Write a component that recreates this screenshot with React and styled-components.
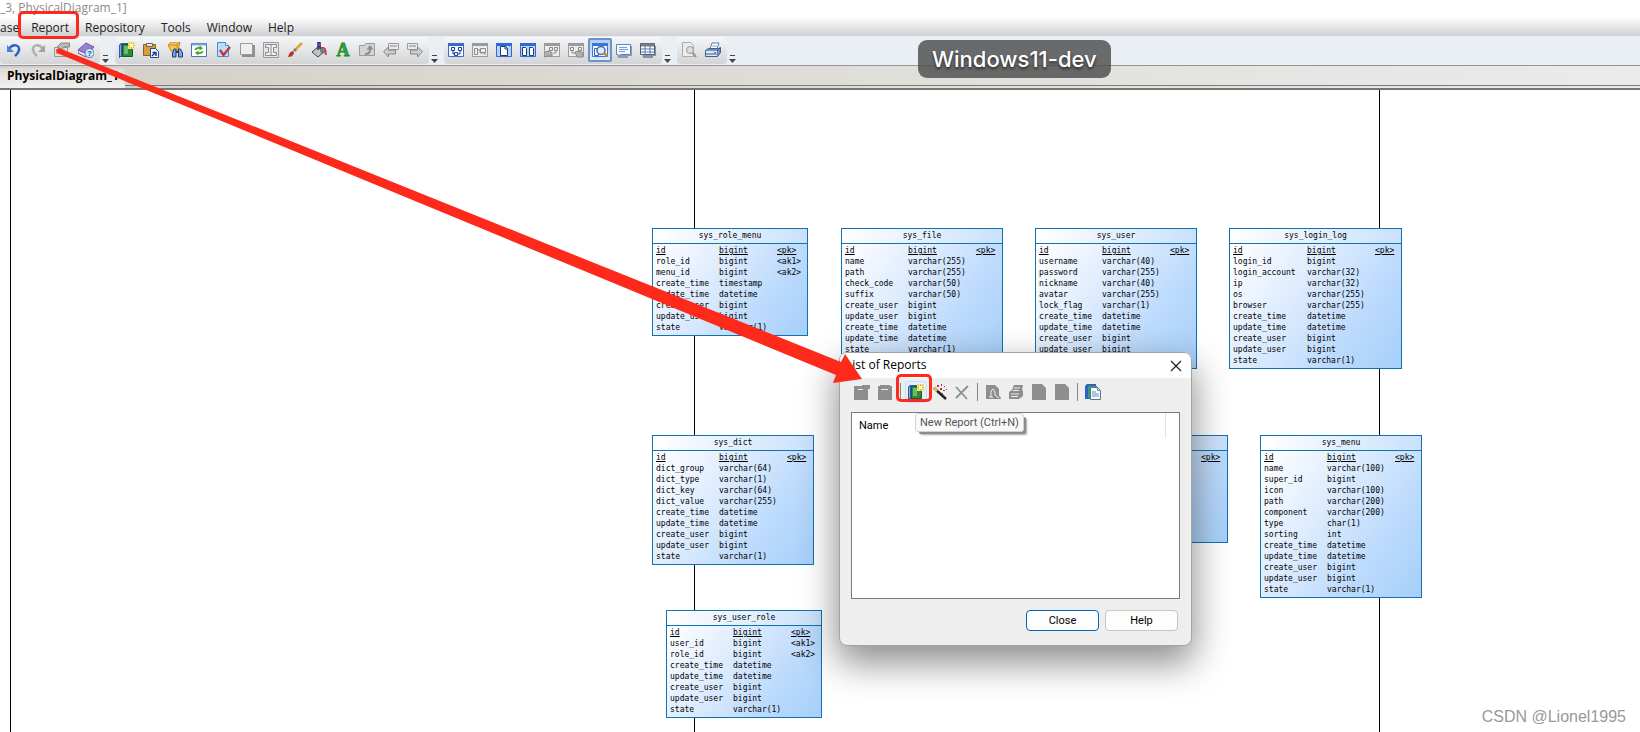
import React from 'react'
import styled, { createGlobalStyle, css } from 'styled-components'

const uiFont = '"Open Sans", "Noto Sans", sans-serif'
const monoFont = '"DejaVu Sans Mono", monospace'
const red = '#fd2a1b'

const GlobalStyle = createGlobalStyle`
  * { box-sizing: border-box; }
  body { margin: 0; background: #fff; color: #111; font-family: ${uiFont}; }
  button { font: inherit; color: inherit; border: 0; padding: 0; background: none; }
`

/* window */
const Window = styled.div`
  position: relative;
  display: flex;
  flex-direction: column;
  min-height: 100vh;
  overflow: hidden;
`
const TitleBar = styled.header`
  height: 18px;
  color: #8b8b8b;
  font-size: 12px;
  line-height: 16px;
  white-space: nowrap;
`
const MenuBar = styled.nav`
  display: flex;
  height: 18px;
  background: linear-gradient(#fdfdfe, #cfd0d2);
`
const MenuItem = styled.button`
  position: relative;
  padding: ${p => (p.$first ? '0 4px 0 0' : '0 8px')};
  font-size: 12px;
  line-height: 19px;
  color: #222;
`
const Highlight = styled.span`
  position: absolute;
  inset: ${p => p.$inset};
  border: 3px solid ${red};
  border-radius: 5px;
  z-index: 3;
  pointer-events: none;
`

/* toolbar */
const ToolBar = styled.div`
  display: flex;
  align-items: center;
  height: 30px;
  background: #e9eff5;
  border-bottom: 1px solid #939598;
`
const ToolGroup = styled.div`
  display: flex;
  padding: 1px 2px 2px ${p => (p.$first ? 2 : 0)}px;
  background: linear-gradient(#f5f6f7, #d3d4d6);
  border-radius: 4px;
`
const ToolButton = styled.button`
  display: grid;
  place-items: center;
  width: 24px;
  height: 24px;
  ${p => p.$active && css`
    background: linear-gradient(#b5cfee, #dcecfc);
    border: 2px solid #6c93c4;
    border-radius: 2px;
  `}
`
const MoreButton = styled.button`
  display: grid;
  place-items: end start;
  width: 15px;
  height: 24px;
  padding-left: 2px;
`

/* diagram tab */
const TabStrip = styled.div`
  display: flex;
  align-items: stretch;
  height: 24px;
  background: linear-gradient(90deg, #d3cfc7, #ecebea);
  border-bottom: 2px solid #757575;
`
const Tab = styled.button`
  margin-top: 2px;
  padding: 0 6px 5px 7px;
  border-radius: 0 4px 0 0;
  background: linear-gradient(#dedbd5, #f2f1ef);
  font-size: 12px;
  font-weight: 700;
  line-height: 15px;
  color: #000;
`
const TabLine = styled.div`
  flex: 1;
  margin-bottom: 2px;
  border-bottom: 1px solid #7c7a77;
`

/* canvas */
const Canvas = styled.main`
  position: relative;
  flex: 1;
  background: #fff;
`
const PageEdge = styled.div`
  position: absolute;
  top: 0;
  bottom: 0;
  left: ${p => p.$x}px;
  border-left: 1px solid #000;
`
const EntityBox = styled.section`
  position: absolute;
  left: ${p => p.$x}px;
  top: ${p => p.$y}px;
  width: ${p => p.$w}px;
  padding-bottom: 2px;
  border: 1px solid #0d74b1;
  background: linear-gradient(125deg, #fff 5%, #dcebfe 42%, #bcdafc 72%, #a6cffa);
  font-family: ${monoFont};
  font-size: 8px;
  color: #000;
`
const EntityName = styled.h2`
  margin: 0 0 1px;
  border-bottom: 1px solid #0d74b1;
  background: linear-gradient(100deg, #fff, #c9e1fc);
  font-size: inherit;
  font-weight: 400;
  line-height: 14px;
  text-align: center;
`
const EntityTable = styled.table`
  width: 100%;
  padding-left: 3px;
  border-spacing: 0;
  table-layout: fixed;
  line-height: 11px;
  white-space: nowrap;
  td { height: 11px; padding: 0; }
  tr.key td { text-decoration: underline; }
`
const Col = styled.col`
  width: ${p => p.$w}px;
`

/* dialog */
const Dialog = styled.div`
  position: absolute;
  left: 839px;
  top: 352px;
  width: 353px;
  border: 1px solid #a3a3a3;
  border-radius: 8px;
  overflow: hidden;
  background: #eee;
`
const DialogShadow = styled(Dialog)`
  height: 293px;
  border-color: transparent;
  overflow: visible;
  box-shadow: 0 16px 36px 2px rgba(0, 0, 0, .45);
`
const DialogTitle = styled.div`
  display: flex;
  justify-content: space-between;
  height: 25px;
  padding: 0 9px 0 6px;
  background: #fff;
  h1 { margin: 0; font-size: 12px; font-weight: 400; line-height: 23px; color: #000; }
`
const DialogTools = styled.div`
  display: flex;
  align-items: center;
  gap: 7px;
  height: 26px;
  margin: 1px 0 7px;
  padding-left: 14px;
`
const DialogTool = styled.button`
  position: relative;
  display: grid;
  place-items: center;
  width: 16px;
  height: 22px;
  ${p => p.$hot && css`
    width: 22px;
    margin: 0 -3px;
    background: #e2f0fb;
    border: 1px solid #c5e0f5;
    border-radius: 3px;
  `}
`
const Divider = styled.i`
  width: 1px;
  height: 18px;
  background: #858585;
`
const ReportList = styled.div`
  height: 187px;
  margin: 0 11px;
  border: 1px solid #767b85;
  background: #fff;
  table { width: calc(100% - 13px); border-spacing: 0; }
  th {
    height: 25px;
    padding: 0 0 0 7px;
    border-right: 1px solid #e2e2e2;
    font: 400 11px Roboto, Arial, sans-serif;
    text-align: left;
    color: #000;
  }
`
const DialogFooter = styled.div`
  display: flex;
  justify-content: flex-end;
  gap: 6px;
  padding: 11px 13px 14px;
`
const PushButton = styled.button`
  width: 73px;
  height: 21px;
  border: 1px solid ${p => (p.$primary ? '#0067c0' : '#c6c6c6')};
  border-radius: 4px;
  background: #fdfdfd;
  font-family: Roboto, Arial, sans-serif;
  font-size: 11px;
  color: #000;
`
const Tooltip = styled.div`
  position: absolute;
  left: 915px;
  top: 413px;
  padding: 0 4px;
  border: 1px solid #d2d2d2;
  border-radius: 3px;
  background: #f9f9f9;
  box-shadow: 3px 3px 0 -1px #8b8b8b, 4px 4px 2px -1px #aaa;
  font: 11px/17px Roboto, Arial, sans-serif;
  color: #555;
`
const Arrow = styled.svg`
  position: absolute;
  left: 0;
  top: 0;
  pointer-events: none;
`
const Machine = styled.div`
  position: absolute;
  left: 918px;
  top: 40px;
  padding: 0 14px;
  border-radius: 9px;
  background: rgba(72, 72, 72, .8);
  color: #fff;
  font: 500 22px/38px Inter, sans-serif;
  text-shadow: 0 2px 3px rgba(0, 0, 0, .6);
`
const Watermark = styled.div`
  position: absolute;
  right: 14px;
  bottom: 5px;
  color: #999;
  font: 16px/20px "Liberation Sans", Arial, sans-serif;
`

const Svg = ({ children, w = 16, h = 16 }) => (
  <svg width={w} height={h} viewBox={`0 0 ${w} ${h}`} fill="none" aria-hidden="true">{children}</svg>
)

const GreenBook = () => (
  <Svg>
    <path d="M0 3l2-2h11v13l-2 2H0z" fill="#2b5fae" />
    <path d="M3.500 2.500h10v12h-10z" fill="#2f8b3b" stroke="#1b5a2a" />
    <path d="M5 4h4v8H5z" fill="#6dbb6b" />
    <path d="M1 15.500h12" stroke="#d9e6d9" />
    <path d="M1.500 3v11" stroke="#7eaee8" />
    <path d="M9 0h7v7H9z" fill="#f7ea8c" />
    <path d="M12.500 0v7M9 3.500h7M9.500.5l6 6M15.500.5l-6 6" stroke="#dcb52c" strokeWidth=".9" />
    <path d="M11 2h3v3h-3z" fill="#fffbd0" />
  </Svg>
)

// small window frame shared by the diagram icons
const Frame = ({ c, fill = '#f3f7fe' }) => (
  <>
    <path d="M.5 1.500h15v13H.5z" fill={fill} stroke={c} />
    <path d="M0 1h16v3H0z" fill={c} />
  </>
)
const blue = '#3a63b5'
const gray = '#9b9b9b'

const icons = {
  undo: <Svg><path d="M3 7c4-6 11-4 10 1-.4 3-2 4-4 6" stroke="#2c5fc4" strokeWidth="2.500" /><path d="M1 3v7h7z" fill="#4d80dc" /></Svg>,
  redo: <Svg><path d="M13 7C9 1 2 3 3 8c.4 3 2 4 4 6" stroke="#b0b0b0" strokeWidth="2.500" /><path d="M15 3v7H8z" fill="#a2a2a2" /></Svg>,
  properties: <Svg><path d="M.5 5.500h13v9H.5z" fill="#dedede" stroke="#999" /><path d="M2 8h3M2 11h9M7 8h4" stroke="#8c8c8c" /><path d="M3 5l4-4h8.500v4h-5l-3 2z" fill="#b9b9b9" stroke="#888" /></Svg>,
  help: <Svg><path d="M0 8l8-7 8 4-7 8z" fill="#9a80d2" stroke="#6e53a8" /><path d="M0 8v3l8 4 1-3z" fill="#e9e3f8" stroke="#6e53a8" /><circle cx="11.500" cy="11" r="4.500" fill="#dceafb" stroke="#4777bd" /><text x="11.500" y="14" textAnchor="middle" fontFamily="Liberation Sans" fontWeight="700" fontSize="8" fill="#174b9b">?</text></Svg>,
  book: <GreenBook />,
  paste: <Svg><path d="M.5 2.500h12v11H.5z" fill="#d79f35" stroke="#8d611a" /><path d="M3.500 1.500h6v3h-6z" fill="#e6e6e6" stroke="#666" /><path d="M7.500 6.500h5l3 3v6h-8z" fill="#f4f8ff" stroke="#234a90" /><path d="M9 14l3.500-3.500M9.500 10.500H13V14" stroke="#1c3e86" strokeWidth="1.500" /></Svg>,
  find: <Svg><path d="M1 3l3-3h9l-2 9H4z" fill="#f7c55a" stroke="#c58b22" /><path d="M1 3h9l3-3M10 3v5" stroke="#c58b22" /><path d="M5.500 15v-4l1.500-4h2v8zM11.500 15V7h2l2 4v4z" fill="#7fa3d8" stroke="#1d3c76" /><path d="M9 10h2" stroke="#1d3c76" strokeWidth="2" /></Svg>,
  refresh: <Svg><path d="M.5 1.500h15v13H.5z" fill="#fff" stroke="#4c76b9" /><path d="M1 2.500h14" stroke="#79a2e0" strokeWidth="2" /><path d="M4.500 8c0-2 3-2.500 5-2M11.500 9c0 2-3 2.500-5 2" stroke="#45a025" strokeWidth="1.800" /><path d="M8.500 3.500l3.500 2.700-3.500 2.300zM7.500 8.500L4 11l3.500 2.500z" fill="#45a025" /></Svg>,
  check: <Svg><path d="M2.500.5h8l3 3v11h-11z" fill="#bcdcfb" stroke="#4b8bd2" /><path d="M10.500.5v3h3" fill="#fff" stroke="#4b8bd2" /><path d="M5 8l3.500 5L15 5" stroke="#c9303a" strokeWidth="2.300" /></Svg>,
  shadow: <Svg><path d="M3 3h13v12H3z" fill="#8f8f8f" /><path d="M1.500 1.500h12v11h-12z" fill="#eee" stroke="#999" /></Svg>,
  textFrame: <Svg><path d="M.5.500h15v15H.5z" fill="#e4e4e4" stroke={gray} /><path d="M2.500 2.500h11v3h-3v5h3v3h-11v-3h3v-5h-3z" fill="#f0f0f0" stroke="#8a8a8a" /><path d="M8 3v10" stroke="#8a8a8a" /></Svg>,
  brush: <Svg><path d="M15 1L8 8" stroke="#e0a52e" strokeWidth="2.500" /><path d="M9 7l-2 2" stroke="#808080" strokeWidth="3" /><path d="M1 15c1-4 3-6 5-6l1 2c-1 3-3 4-6 4z" fill="#b8341e" /></Svg>,
  bucket: <Svg><path d="M1 10l7-6 6 5-7 6z" fill="#c4c4c4" stroke="#444" /><path d="M8 4l6 5-4 3z" fill="#777" /><path d="M7 8V.5h2V7" stroke="#222a82" strokeWidth="1.500" /><path d="M10 6c3-1 5 0 5 7" stroke="#e62727" strokeWidth="1.500" /><path d="M10 7.500c3-1 3.500 1 3.500 5" stroke="#1fb6e9" /></Svg>,
  font: <Svg w={18} h={20}><text x="9" y="16" textAnchor="middle" fontFamily="Liberation Serif" fontWeight="700" fontSize="18" fill="#2fa43a" stroke="#1f8a2c" strokeWidth=".8">A</text></Svg>,
  folderUp: <Svg><path d="M.5 3.500h5l1-2h9v12H.5z" fill="#d4d4d4" stroke={gray} /><path d="M6 12c4 0 5-1 5-5" stroke="#8b8b8b" strokeWidth="2" /><path d="M7.500 7.500L11 3l3.500 4.500z" fill="#8b8b8b" /></Svg>,
  back: <Svg><path d="M5.500 1.500h10v6h-10z" fill="#eaeaea" stroke={gray} /><path d="M7 4h7" stroke="#888" /><path d="M.5 9.500l5-4.500v3h7v4h-7v3z" fill="#ccc" stroke="#888" /></Svg>,
  forward: <Svg><path d="M.5 1.500h10v6H.5z" fill="#eaeaea" stroke={gray} /><path d="M2 4h7" stroke="#888" /><path d="M15.500 9.500l-5-4.500v3h-7v4h7v3z" fill="#ccc" stroke="#888" /></Svg>,
  physical: <Svg><Frame c="#3c6ac7" /><path d="M3.500 5.500h3v3h-3zM10.500 5.500h3v3h-3zM6.500 10.500h3v3h-3zM5 9v3h2M12 9v3h-3" stroke="#2638a2" /></Svg>,
  logical: <Svg><Frame c={gray} fill="#eee" /><path d="M2.500 6.500h3v6h-3zM6 8h2v3h5v2M8.500 6.500h5v4h-5z" stroke="#8b8b8b" /></Svg>,
  page: <Svg><Frame c="#2c69df" fill="#b9d1f5" /><path d="M4.500 4.500h5l2 2v7h-7z" fill="#fff" stroke="#1f3c6e" /><path d="M9 4v3h3" stroke="#1f3c6e" /></Svg>,
  pages: <Svg><Frame c="#2c69df" fill="#b9d1f5" /><path d="M2.500 5.500h3l1 1v7h-4zM9.500 5.500h3l1 1v7h-4z" fill="#fff" stroke="#1f3c6e" /></Svg>,
  parent: <Svg><Frame c={gray} fill="#eee" /><path d="M5.500 5.500h3v3h-3zM10.500 5.500h3v3h-3zM12 9v2H9" stroke="#888" /><path d="M0 11c2-2 6-3 8 0v3H4c-2 0-3 1-4 1z" fill="#b1b1b1" stroke="#888" /></Svg>,
  child: <Svg><Frame c={gray} fill="#eee" /><path d="M2.500 5.500h3v3h-3zM10.500 5.500h3v3h-3zM4 9v2h3" stroke="#888" /><path d="M7 10c2-1 6-1 8 1v4H9z" fill="#b1b1b1" stroke="#888" /></Svg>,
  zoomView: <Svg><Frame c="#3976df" /><path d="M2.500 6.500h4v7h-4z" stroke={blue} /><circle cx="9" cy="8.500" r="4" fill="#d7ecff" stroke="#52698b" strokeWidth="1.500" /><path d="M12 11l3 3" stroke="#e08a25" strokeWidth="3" /></Svg>,
  note: <Svg><path d="M2 4h14v10h-4v2H2z" fill="#8c9cb4" /><path d="M.5 2.500h14v10h-10L2 14.500v-2H.5z" fill="#f5faff" stroke="#6085bb" /><path d="M3 5.500h8M3 7.500h9M3 9.500h6" stroke="#7c9cd0" /></Svg>,
  grid: <Svg><path d="M2 4h14v10h-3v2H3z" fill="#8691a5" /><path d="M.5 1.500h14v11H.5z" fill="#fff" stroke="#555b66" /><path d="M1 3h13" stroke="#777d88" strokeWidth="3" /><path d="M1 7h13M1 10h13M5 4v9M10 4v9" stroke="#5572b4" /></Svg>,
  preview: <Svg><path d="M1.500.5h8l3 3v11h-11z" fill="#ececec" stroke="#aaa" /><circle cx="9" cy="8" r="3.500" fill="#ddd" stroke="#999" /><path d="M11.500 11l3.500 4" stroke="#999" strokeWidth="2.500" /></Svg>,
  print: <Svg><path d="M5 7l2-6h7l-2 6z" fill="#fff" stroke="#5a7fb5" /><path d="M7 4h5" stroke="#8baad6" /><path d="M.5 8.500l3-2h10l2-1v5l-3 4H.5z" fill="#6f8fbd" stroke="#3c5f94" /><path d="M1 9h11v5H1z" fill="#dfe8f4" /><path d="M1 12h11M12 9l3-3" stroke="#34558a" /><path d="M9 10.500h2" stroke="#e34324" /></Svg>,
  close: <Svg w={12} h={12}><path d="M1 1l10 10M11 1L1 11" stroke="#222" strokeWidth="1.200" /></Svg>,
  folderNew: <Svg><path d="M0 2h8V1h8v4h-2v11H0z" fill="#8e8e8e" /><path d="M4 5.500h5" stroke="#eee" /></Svg>,
  folder: <Svg><path d="M1 2h2V1h10v1h2v14H1z" fill="#8e8e8e" /><path d="M4 5.500h7" stroke="#eee" /></Svg>,
  wand: <Svg><path d="M3 4l12 11" stroke="#222" strokeWidth="2.500" /><path d="M3 4l3 3" stroke="#e5c643" strokeWidth="2.500" /><g fill="#c22a46"><path d="M6 1h2v2H6zM10 0h1v2h-1zM13 2h1v1h-1zM9 4h2v2H9zM12 6h2v1h-2zM15 5h1v1h-1zM11 9h1v1h-1z" /></g></Svg>,
  remove: <Svg><path d="M2 3l11 12M14 2L2 14" stroke="#8e8e8e" strokeWidth="1.800" /></Svg>,
  previewOff: <Svg><path d="M1 1h9l4 4v7h1l1 3H1z" fill="#8e8e8e" /><path d="M6 13V7l2-2 2 3v3l4 3M4 13h4" stroke="#eee" /></Svg>,
  printOff: <Svg><path d="M6 1h9l-1 5 1 1v5l-4 3H1V8l3-2z" fill="#8e8e8e" /><path d="M6 4h6M5 6.500h6M3 10h8M3 12.500h7" stroke="#eee" /></Svg>,
  doc: <Svg><path d="M1 0h10l4 4v12H1z" fill="#8e8e8e" /></Svg>,
  reports: <Svg><path d="M0 2l2-2h9v13l-2 2H0z" fill="#2965b8" /><path d="M3 2h9v12H3z" fill="#3d9b69" /><path d="M5.500 3.500h7l3 3v9h-10z" fill="#f7fbff" stroke="#57739b" /><path d="M12.500 3.500v3h3M7 8h4M7 10h7M7 12h7" stroke="#6d8fc1" /></Svg>,
}

const toolGroups = [
  ['undo', 'redo', 'properties', 'help'],
  ['book', 'paste', 'find', 'refresh', 'check', 'shadow', 'textFrame', 'brush', 'bucket', 'font', 'folderUp', 'back', 'forward'],
  ['physical', 'logical', 'page', 'pages', 'parent', 'child', 'zoomView', 'note', 'grid'],
  ['preview', 'print'],
]

const dialogTools = ['folderNew', 'folder', '|', 'book', 'wand', 'remove', '|', 'previewOff', 'printOff', 'doc', 'doc', '|', 'reports']

// columns every entity ends with
const timesThenUsers = ['create_time datetime', 'update_time datetime', 'create_user bigint', 'update_user bigint', 'state varchar(1)']
const usersThenTimes = ['create_user bigint', 'update_user bigint', 'create_time datetime', 'update_time datetime', 'state varchar(1)']

const entities = [
  {
    name: 'sys_role_menu', x: 652, y: 138, w: 156, cols: [63, 58],
    rows: ['id bigint <pk>', 'role_id bigint <ak1>', 'menu_id bigint <ak2>', 'create_time timestamp', ...timesThenUsers.slice(1)],
  },
  {
    name: 'sys_file', x: 841, y: 138, w: 162, cols: [63, 68],
    rows: ['id bigint <pk>', 'name varchar(255)', 'path varchar(255)', 'check_code varchar(50)', 'suffix varchar(50)', ...usersThenTimes],
  },
  {
    name: 'sys_user', x: 1035, y: 138, w: 162, cols: [63, 68],
    rows: ['id bigint <pk>', 'username varchar(40)', 'password varchar(255)', 'nickname varchar(40)', 'avatar varchar(255)', 'lock_flag varchar(1)', ...timesThenUsers],
  },
  {
    name: 'sys_login_log', x: 1229, y: 138, w: 173, cols: [74, 68],
    rows: ['id bigint <pk>', 'login_id bigint', 'login_account varchar(32)', 'ip varchar(32)', 'os varchar(255)', 'browser varchar(255)', ...timesThenUsers],
  },
  {
    name: 'sys_dict', x: 652, y: 345, w: 162, cols: [63, 68],
    rows: ['id bigint <pk>', 'dict_group varchar(64)', 'dict_type varchar(1)', 'dict_key varchar(64)', 'dict_value varchar(255)', ...timesThenUsers],
  },
  {
    name: 'sys_role', x: 1066, y: 345, w: 162, cols: [63, 68],
    rows: ['id bigint <pk>', 'name varchar(64)', 'remark varchar(255)', ...timesThenUsers],
  },
  {
    name: 'sys_menu', x: 1260, y: 345, w: 162, cols: [63, 68],
    rows: ['id bigint <pk>', 'name varchar(100)', 'super_id bigint', 'icon varchar(100)', 'path varchar(200)', 'component varchar(200)', 'type char(1)', 'sorting int', ...timesThenUsers],
  },
  {
    name: 'sys_user_role', x: 666, y: 520, w: 156, cols: [63, 58],
    rows: ['id bigint <pk>', 'user_id bigint <ak1>', 'role_id bigint <ak2>', ...timesThenUsers],
  },
]

function Entity({ name, x, y, w, cols, rows }) {
  return (
    <EntityBox $x={x} $y={y} $w={w}>
      <EntityName>{name}</EntityName>
      <EntityTable>
        <colgroup>
          <Col $w={cols[0]} />
          <Col $w={cols[1]} />
          <col />
        </colgroup>
        <tbody>
          {rows.map((row, i) => {
            const [field, type, key] = row.split(' ')
            return (
              <tr key={field} className={i === 0 ? 'key' : undefined}>
                <td>{field}</td>
                <td>{type}</td>
                <td>{key}</td>
              </tr>
            )
          })}
        </tbody>
      </EntityTable>
    </EntityBox>
  )
}

function ReportsDialog() {
  return (
    <>
      <DialogShadow aria-hidden="true" />
      <Dialog role="dialog" aria-labelledby="reports-title">
        <DialogTitle>
          <h1 id="reports-title">List of Reports</h1>
          <button aria-label="Close window">{icons.close}</button>
        </DialogTitle>
        <DialogTools>
          {dialogTools.map((tool, i) => (
            tool === '|' ? <Divider key={i} /> : (
              <DialogTool key={i} aria-label={tool} $hot={tool === 'book'}>
                {icons[tool]}
                {tool === 'book' && <Highlight $inset="-8px -6px 0 -10px" />}
              </DialogTool>
            )
          ))}
        </DialogTools>
        <ReportList>
          <table>
            <thead>
              <tr><th scope="col">Name</th></tr>
            </thead>
          </table>
        </ReportList>
        <DialogFooter>
          <PushButton $primary>Close</PushButton>
          <PushButton>Help</PushButton>
        </DialogFooter>
      </Dialog>
      <Tooltip role="tooltip">New Report (Ctrl+N)</Tooltip>
    </>
  )
}

function App() {
  return (
    <Window>
      <GlobalStyle />
      <TitleBar>_3, PhysicalDiagram_1]</TitleBar>
      <MenuBar>
        <MenuItem $first>ase</MenuItem>
        <MenuItem>Report<Highlight $inset="-7px -2px -3px -5px" /></MenuItem>
        <MenuItem>Repository</MenuItem>
        <MenuItem>Tools</MenuItem>
        <MenuItem>Window</MenuItem>
        <MenuItem>Help</MenuItem>
      </MenuBar>
      <ToolBar>
        {toolGroups.map((group, g) => (
          <React.Fragment key={g}>
            <ToolGroup $first={g === 0}>
              {group.map(name => (
                <ToolButton key={name} aria-label={name} $active={name === 'zoomView'}>{icons[name]}</ToolButton>
              ))}
            </ToolGroup>
            <MoreButton aria-label="More">
              <Svg w={7} h={8}><path d="M1 .5h5" stroke="#444" /><path d="M0 4h7L3.500 8z" fill="#444" /></Svg>
            </MoreButton>
          </React.Fragment>
        ))}
      </ToolBar>
      <TabStrip>
        <Tab>PhysicalDiagram_1</Tab>
        <TabLine />
      </TabStrip>
      <Canvas>
        {[10, 694, 1379].map(x => <PageEdge key={x} $x={x} />)}
        {entities.map(entity => <Entity key={entity.name} {...entity} />)}
      </Canvas>
      <ReportsDialog />
      <Arrow width="870" height="400" viewBox="0 0 870 400" aria-hidden="true">
        <path d="M60 48.500L841 362l4-8 17 25-29 4 3-8L58 53.500a2.600 2.600 0 0 1 2-5z" fill={red} />
      </Arrow>
      <Machine>Windows11-dev</Machine>
      <Watermark>CSDN @Lionel1995</Watermark>
    </Window>
  )
}

export default App
